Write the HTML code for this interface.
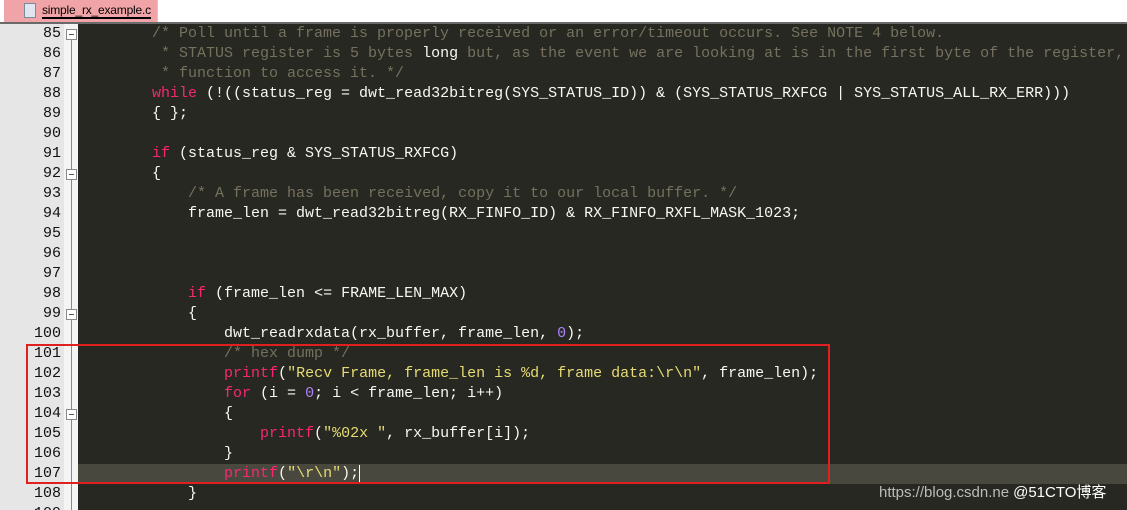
<!DOCTYPE html>
<html><head><meta charset="utf-8"><style>
html,body{margin:0;width:1127px;height:510px;overflow:hidden}
body{background:#272822;position:relative;font-family:"Liberation Mono",monospace}
.tabbar{position:absolute;left:0;top:0;width:1127px;height:22px;background:#fff}
.tab{position:absolute;left:4px;top:0;width:153px;height:22px;background:#f1a4a7;border-right:1px solid #ccc}
.tab span{position:absolute;left:38px;top:3px;font:12px "Liberation Sans",sans-serif;color:#000;border-bottom:2px solid #000;line-height:14px;letter-spacing:-0.2px}
.icon{position:absolute;left:20px;top:3px;width:10px;height:13px;background:#dfe6f0;border:1px solid #7a8aa0}
.sep{position:absolute;left:0;top:22px;width:1127px;height:2px;background:#6a6a6a}
.gut{position:absolute;left:0;top:24px;width:64px;height:486px;background:#e6e6e6}
.fold{position:absolute;left:64px;top:24px;width:14px;height:486px;background:#f4f4f4}
.fl{position:absolute;left:71px;width:1px;background:#888}
.box{position:absolute;left:66px;width:9px;height:9px;border:1px solid #888;background:#fff}
.box:after{content:"";position:absolute;left:2px;top:4px;width:5px;height:1px;background:#555}
.ln{position:absolute;left:0;width:61px;text-align:right;font:15px "Liberation Mono",monospace;color:#111;line-height:20px}
.code{position:absolute;left:80px;top:24px;font-size:15px;line-height:20px;color:#f8f8f2;white-space:pre}
.cur{position:absolute;left:78px;top:464px;width:1049px;height:20px;background:#49483e}
.c{color:#75715e}.k{color:#f92672}.n{color:#ae81ff}.s{color:#e6db74}
.red{position:absolute;left:26px;top:344px;width:800px;height:136px;border:2px solid #e0201e}
.wm{position:absolute;left:879px;top:481px;font:15px "Liberation Sans","Noto Sans CJK SC",sans-serif;color:#bbb;white-space:nowrap}
</style></head><body>
<div class="tabbar"><div class="tab"><div class="icon"></div><span>simple_rx_example.c</span></div></div>
<div class="sep"></div>
<div class="gut"></div>
<div class="fold"></div>
<div class="cur"></div>
<div class="fl" style="top:40px;height:470px"></div>
<div class="box" style="top:29px"></div>
<div class="box" style="top:169px"></div>
<div class="box" style="top:309px"></div>
<div class="box" style="top:409px"></div>
<div class="ln" style="top:24px">85<br>86<br>87<br>88<br>89<br>90<br>91<br>92<br>93<br>94<br>95<br>96<br>97<br>98<br>99<br>100<br>101<br>102<br>103<br>104<br>105<br>106<br>107<br>108<br>109</div>
<div class="code"><span class="c">        /* Poll until a frame is properly received or an error/timeout occurs. See NOTE 4 below.
         * STATUS register is 5 bytes <span style="color:#f8f8f2">long</span> but, as the event we are looking at is in the first byte of the register,
         * function to access it. */</span>
        <span class="k">while</span> (!((status_reg = dwt_read32bitreg(SYS_STATUS_ID)) &amp; (SYS_STATUS_RXFCG | SYS_STATUS_ALL_RX_ERR)))
        { };

        <span class="k">if</span> (status_reg &amp; SYS_STATUS_RXFCG)
        {
            <span class="c">/* A frame has been received, copy it to our local buffer. */</span>
            frame_len = dwt_read32bitreg(RX_FINFO_ID) &amp; RX_FINFO_RXFL_MASK_1023;



            <span class="k">if</span> (frame_len &lt;= FRAME_LEN_MAX)
            {
                dwt_readrxdata(rx_buffer, frame_len, <span class="n">0</span>);
                <span class="c">/* hex dump */</span>
                <span class="k">printf</span>(<span class="s">"Recv Frame, frame_len is %d, frame data:\r\n"</span>, frame_len);
                <span class="k">for</span> (i = <span class="n">0</span>; i &lt; frame_len; i++)
                {
                    <span class="k">printf</span>(<span class="s">"%02x "</span>, rx_buffer[i]);
                }
                <span class="k">printf</span>(<span class="s">"\r\n"</span>);<span style="border-left:1px solid #fff"></span>
            }
</div>
<div class="red"></div>
<div class="wm">https://blog.csdn.ne<span style="color:#fff;margin-left:-6px;position:relative;left:10px">@51CTO博客</span></div>
</body></html>
